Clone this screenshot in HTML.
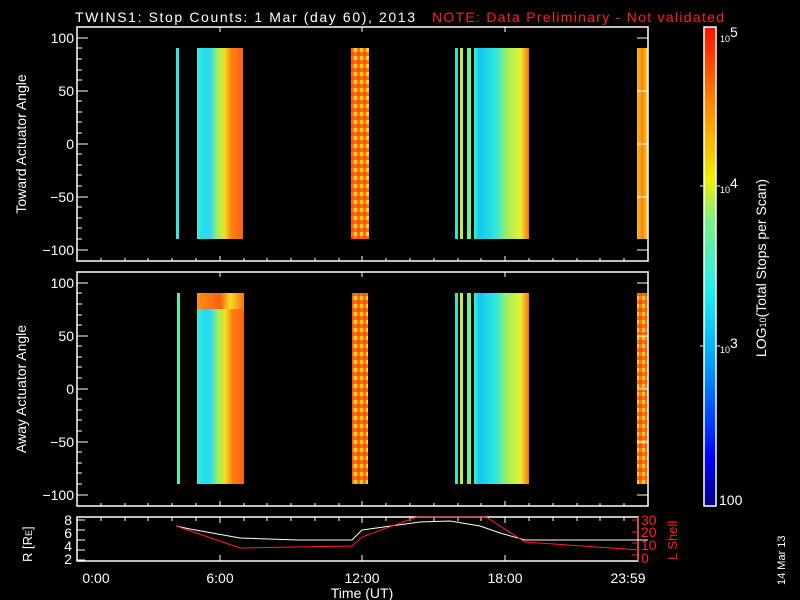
<!DOCTYPE html>
<html><head><style>
html,body{margin:0;padding:0;background:#000;width:800px;height:600px;overflow:hidden}
svg{display:block}
text{font-family:"Liberation Sans",sans-serif;fill:#fff}
</style></head><body>
<svg width="800" height="600" viewBox="0 0 800 600">
<defs>
<linearGradient id="w1" x1="0" x2="1" y1="0" y2="0">
<stop offset="0" stop-color="#3ff0d0"/><stop offset="0.12" stop-color="#20e0f0"/><stop offset="0.28" stop-color="#30d8f0"/><stop offset="0.45" stop-color="#a0f060"/><stop offset="0.6" stop-color="#f0e020"/><stop offset="0.75" stop-color="#ff8010"/><stop offset="1" stop-color="#ff6010"/></linearGradient>
<linearGradient id="w2" x1="0" x2="1" y1="0" y2="0">
<stop offset="0" stop-color="#40f0c0"/><stop offset="0.1" stop-color="#10c8f0"/><stop offset="0.4" stop-color="#30e8e0"/><stop offset="0.6" stop-color="#a0f060"/><stop offset="0.85" stop-color="#e8f030"/><stop offset="1" stop-color="#ff7010"/></linearGradient>
<linearGradient id="w3" x1="0" x2="1" y1="0" y2="0">
<stop offset="0" stop-color="#ff9010"/><stop offset="0.5" stop-color="#ff6010"/><stop offset="0.7" stop-color="#f0e020"/><stop offset="1" stop-color="#ff7010"/></linearGradient>
<linearGradient id="w4" x1="0" x2="1" y1="0" y2="0">
<stop offset="0" stop-color="#f0c020"/><stop offset="0.5" stop-color="#ff8010"/><stop offset="1" stop-color="#f0e020"/></linearGradient>
<linearGradient id="cb" x1="0" x2="0" y1="1" y2="0">
<stop offset="0" stop-color="#000080"/><stop offset="0.1" stop-color="#0000ff"/><stop offset="0.3" stop-color="#00a0ff"/><stop offset="0.45" stop-color="#20f0f0"/><stop offset="0.6" stop-color="#80f080"/><stop offset="0.68" stop-color="#f0f000"/><stop offset="0.85" stop-color="#ff8000"/><stop offset="1" stop-color="#ff1000"/></linearGradient>
<pattern id="n" width="6" height="8" patternUnits="userSpaceOnUse"><rect width="6" height="8" fill="#ff7010"/><rect x="0" y="0" width="3" height="4" fill="#f0d020"/><rect x="3" y="4" width="3" height="4" fill="#ff5010"/></pattern>
</defs>
<text x="75" y="22" font-size="14" textLength="340">TWINS1: Stop Counts:  1 Mar (day  60), 2013</text>
<text x="432" y="22" font-size="14" style="fill:#ff2020" textLength="292">NOTE: Data Preliminary - Not validated</text>

<rect x="176" y="48" width="3" height="191" fill="#30e8e0"/>
<rect x="197" y="48" width="46" height="191" fill="url(#w1)"/>
<rect x="351" y="48" width="18" height="191" fill="url(#n)"/>
<rect x="455" y="48" width="3" height="191" fill="#30e8d0"/>
<rect x="460" y="48" width="3" height="191" fill="#c0f030"/>
<rect x="467" y="48" width="4" height="191" fill="#70f090"/>
<rect x="474" y="48" width="55" height="191" fill="url(#w2)"/>
<rect x="637" y="48" width="11" height="191" fill="url(#w4)"/>
<rect x="177" y="293" width="3" height="191" fill="#50f0b0"/>
<rect x="197" y="293" width="47" height="191" fill="url(#w1)"/>
<rect x="197" y="293" width="47" height="16" fill="url(#w3)"/>
<rect x="352" y="293" width="16" height="191" fill="url(#n)"/>
<rect x="455" y="293" width="3" height="191" fill="#30e8d0"/>
<rect x="460" y="293" width="3" height="191" fill="#c0f030"/>
<rect x="467" y="293" width="4" height="191" fill="#70f090"/>
<rect x="474" y="293" width="55" height="191" fill="url(#w2)"/>
<rect x="637" y="293" width="11" height="191" fill="url(#n)"/>

<g stroke="#fff" fill="none" stroke-width="1.5">
<rect x="77" y="27" width="571" height="234"/>
<rect x="77" y="272" width="571" height="234"/>
<rect x="77" y="517" width="561" height="44"/>
<rect x="704" y="27" width="12" height="479" fill="url(#cb)"/>
</g>
<g stroke="#fff" stroke-width="1">
<path d="M77 38h11M77 91h11M77 144h11M77 197h11M77 250h11M648 38h-11M648 91h-11M648 144h-11M648 197h-11M648 250h-11"/>
<path d="M77 283h11M77 336h11M77 389h11M77 442h11M77 495h11M648 283h-11M648 336h-11M648 389h-11M648 442h-11M648 495h-11"/>
<path d="M77 48h5M77 59h5M77 70h5M77 80h5M77 101h5M77 112h5M77 122h5M77 133h5M77 154h5M77 165h5M77 175h5M77 186h5M77 207h5M77 218h5M77 228h5M77 239h5"/>
<path d="M77 293h5M77 304h5M77 315h5M77 325h5M77 346h5M77 357h5M77 367h5M77 378h5M77 399h5M77 410h5M77 420h5M77 431h5M77 452h5M77 463h5M77 473h5M77 484h5"/>
<path d="M220 27v5M362 27v5M505 27v5M220 261v-5M362 261v-5M505 261v-5M220 272v5M362 272v5M505 272v5M220 506v-5M362 506v-5M505 506v-5M220 517v6M362 517v6M505 517v6M220 561v-6M362 561v-6M505 561v-6"/>
<path d="M101 261v-3M125 261v-3M148 261v-3M172 261v-3M196 261v-3M244 261v-3M267 261v-3M291 261v-3M315 261v-3M339 261v-3M386 261v-3M410 261v-3M434 261v-3M458 261v-3M481 261v-3M529 261v-3M553 261v-3M577 261v-3M600 261v-3M624 261v-3"/>
<path d="M101 506v-3M125 506v-3M148 506v-3M172 506v-3M196 506v-3M244 506v-3M267 506v-3M291 506v-3M315 506v-3M339 506v-3M386 506v-3M410 506v-3M434 506v-3M458 506v-3M481 506v-3M529 506v-3M553 506v-3M577 506v-3M600 506v-3M624 506v-3"/>
<path d="M101 517v4M125 517v4M148 517v4M172 517v4M196 517v4M244 517v4M267 517v4M291 517v4M315 517v4M339 517v4M386 517v4M410 517v4M434 517v4M458 517v4M481 517v4M529 517v4M553 517v4M577 517v4M600 517v4M624 517v4"/>
<path d="M77 520h8M77 530h8M77 540h8M77 550h8M77 560h8"/>
<path d="M700 186h3M717 186h3M700 346h3M717 346h3"/>
</g>
<g stroke="#ff2020" stroke-width="1"><path d="M638 517v44M638 520h-6M638 532h-6M638 543h-6M638 555h-6"/></g>
<polyline fill="none" stroke="#fff" stroke-width="1" points="176,526 190,529 240,538 297,540 352,540 362,530 420,522 450,521 480,526 500,533 525,540 580,540 640,540 648,540"/>
<polyline fill="none" stroke="#ff2020" stroke-width="1" points="176,526 240,548 352,546 362,537 417,517 486,517 525,542 640,550"/>

<g font-size="14" text-anchor="end">
<text x="74" y="43">100</text><text x="74" y="96">50</text><text x="74" y="149">0</text><text x="74" y="202">−50</text><text x="74" y="255">−100</text>
<text x="74" y="288">100</text><text x="74" y="341">50</text><text x="74" y="394">0</text><text x="74" y="447">−50</text><text x="74" y="500">−100</text>
<text x="72" y="525">8</text><text x="72" y="538">6</text><text x="72" y="551">4</text><text x="72" y="564">2</text>
</g>
<g font-size="14">
<text x="641" y="525" style="fill:#ff2020">30</text><text x="641" y="537" style="fill:#ff2020">20</text><text x="641" y="550" style="fill:#ff2020">10</text><text x="641" y="563" style="fill:#ff2020">0</text>
</g>
<text x="677" y="560" font-size="13" transform="rotate(-90 677 560)" style="fill:#ff2020">L Shell</text>
<text x="32" y="562" font-size="13" transform="rotate(-90 32 562)">R [R<tspan font-size="9">E</tspan>]</text>
<g font-size="14" text-anchor="middle">
<text x="96" y="583">0:00</text><text x="220" y="583">6:00</text><text x="362" y="583">12:00</text><text x="505" y="583">18:00</text><text x="628" y="583">23:59</text>
<text x="362" y="598">Time (UT)</text>
</g>
<text x="26" y="144" font-size="14" text-anchor="middle" transform="rotate(-90 26 144)">Toward Actuator Angle</text>
<text x="26" y="389" font-size="14" text-anchor="middle" transform="rotate(-90 26 389)">Away Actuator Angle</text>
<text x="720" y="42" font-size="9">10</text><text x="730" y="37" font-size="14">5</text>
<text x="720" y="193" font-size="9">10</text><text x="730" y="188" font-size="14">4</text>
<text x="720" y="353" font-size="9">10</text><text x="730" y="348" font-size="14">3</text>
<text x="719" y="505" font-size="14">100</text>
<text x="766" y="268" font-size="14" text-anchor="middle" transform="rotate(-90 766 268)">LOG<tspan font-size="9">10</tspan>(Total Stops per Scan)</text>
<text x="785" y="585" font-size="11" transform="rotate(-90 785 585)">14 Mar 13</text>
</svg>
</body></html>
